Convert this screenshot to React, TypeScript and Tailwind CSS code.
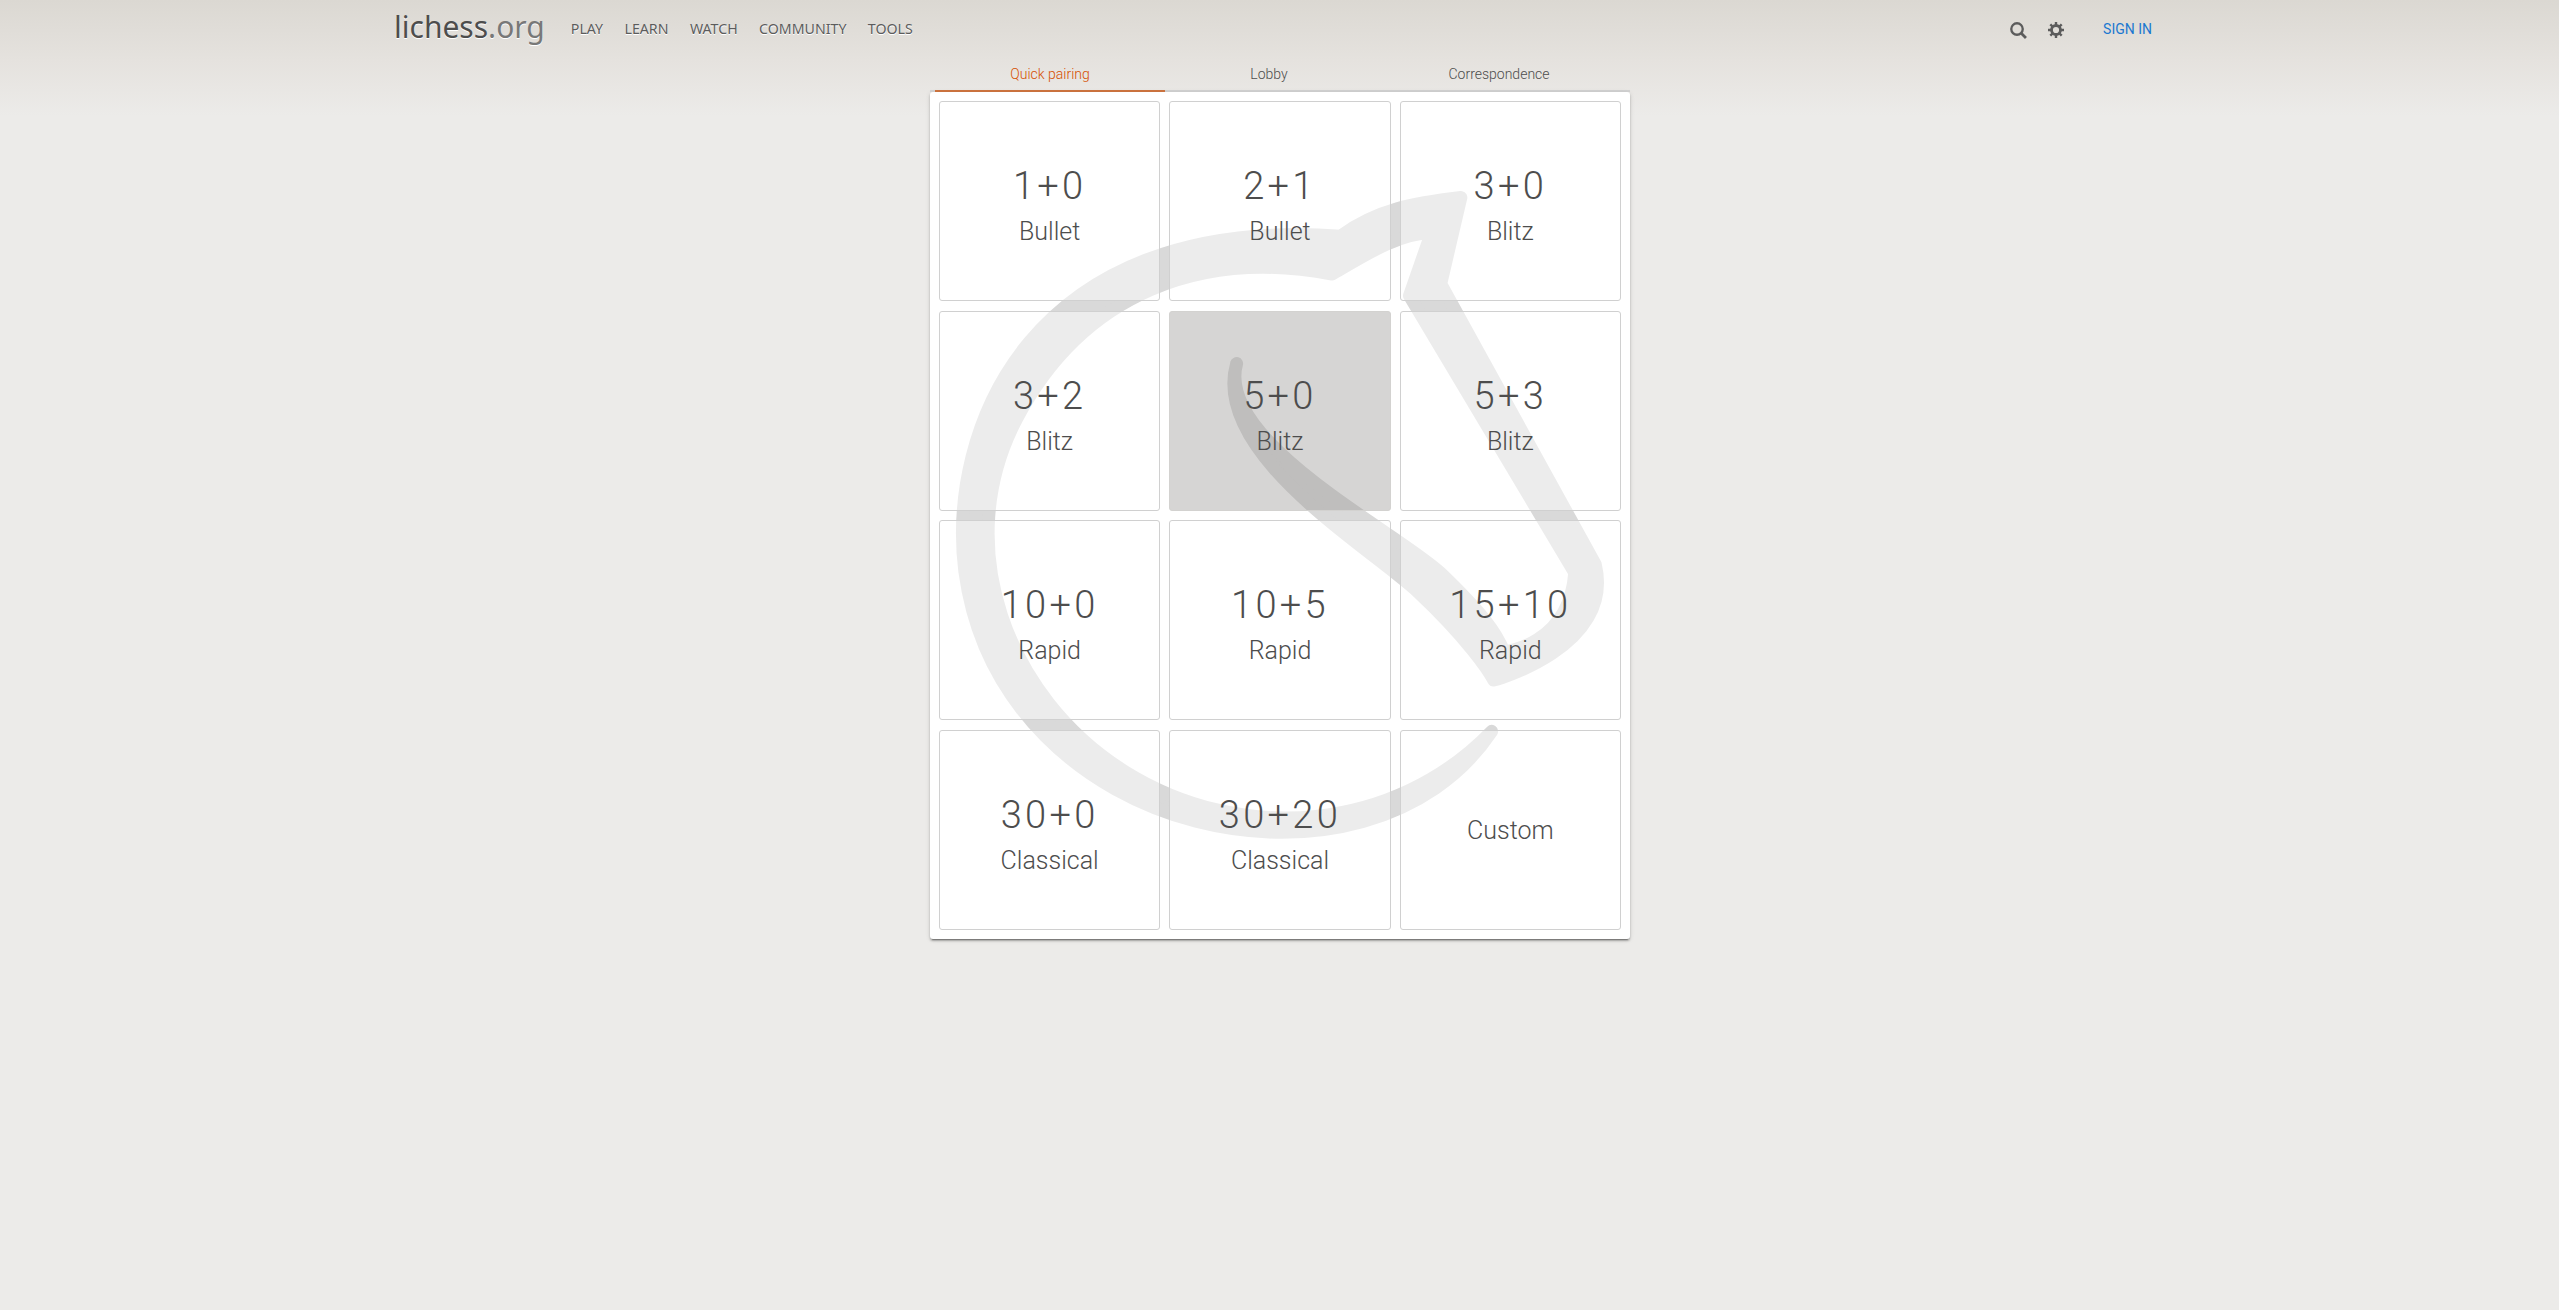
const KNIGHT =
  'M38.956.5c-3.53.418-6.452.902-9.286 2.984C5.534 1.786-.692 18.533.68 29.364 3.493 50.214 31.918 55.785 41.329 41.7c-7.444 7.696-19.276 8.752-28.323 3.084C3.959 39.116-.506 27.392 4.683 17.567 9.873 7.742 18.996 4.535 29.03 6.405c2.43-1.418 5.225-3.22 7.655-3.187l-1.694 4.86 12.752 21.37c-.439 5.654-5.459 6.112-5.459 6.112-.574-1.47-1.634-2.942-4.842-6.036-3.207-3.094-17.465-10.177-15.788-16.207-2.001 6.967 10.311 14.152 14.04 17.663 3.73 3.51 5.426 6.04 5.795 6.756 0 0 9.392-2.504 7.838-8.927L37.4 7.171z';

const NAV = ['Play', 'Learn', 'Watch', 'Community', 'Tools'];

const POOLS = [
  { clock: '1+0', perf: 'Bullet' },
  { clock: '2+1', perf: 'Bullet' },
  { clock: '3+0', perf: 'Blitz' },
  { clock: '3+2', perf: 'Blitz' },
  { clock: '5+0', perf: 'Blitz' },
  { clock: '5+3', perf: 'Blitz' },
  { clock: '10+0', perf: 'Rapid' },
  { clock: '10+5', perf: 'Rapid' },
  { clock: '15+10', perf: 'Rapid' },
  { clock: '30+0', perf: 'Classical' },
  { clock: '30+20', perf: 'Classical' },
];

const HOVERED = '5+0';

function SearchIcon() {
  return (
    <svg viewBox="0 0 16 16" className="size-[17px]" fill="none" stroke="currentColor">
      <circle cx="6.6" cy="6.6" r="5.4" strokeWidth="2.2" />
      <path d="M10.6 10.6l4.4 4.4" strokeWidth="2.6" />
    </svg>
  );
}

function GearIcon() {
  return (
    <svg viewBox="-8 -8 16 16" className="size-4" fill="none" stroke="currentColor">
      <circle r="4.5" strokeWidth="2.8" />
      <path
        strokeWidth="2.4"
        d="M0-5V-8M0 5V8M-5 0H-8M5 0H8M-3.5-3.5L-5.7-5.7M3.5-3.5L5.7-5.7M-3.5 3.5L-5.7 5.7M3.5 3.5L5.7 5.7"
      />
    </svg>
  );
}

function Header() {
  return (
    <header className="mx-auto flex h-[60px] w-[1771px] items-center pb-1 text-[#5c5c5c] [text-shadow:0_1px_0_#fff]">
      <a className="pb-[2px] text-[30px] leading-none text-[#4d4d4d]">
        lichess<span className="text-[#787878]">.org</span>
      </a>
      <nav className="ml-[26px] flex gap-[21.4px] pt-px text-[14.2px] uppercase">
        {NAV.map((item) => (
          <a key={item}>{item}</a>
        ))}
      </nav>
      <div className="ml-auto flex items-center pt-1 pr-[13px]">
        <SearchIcon />
        <span className="ml-[21px]">
          <GearIcon />
        </span>
        <a className="ml-[39px] pb-[2px] font-[Roboto] text-sm text-[#1b78d0] uppercase [text-shadow:none]">Sign in</a>
      </div>
    </header>
  );
}

function Tabs() {
  return (
    <div className="grid h-8 grid-cols-[230px_208px_252px] border-b-2 border-[#d3d3d3] px-[5px] text-center text-sm font-light text-[#4d4d4d]">
      <span className="h-8 border-b-2 border-[#d07540] pt-1 text-[#d64f00]">Quick pairing</span>
      <span className="pt-1">Lobby</span>
      <span className="pt-1">Correspondence</span>
    </div>
  );
}

function Pools() {
  return (
    <div className="relative h-[847px] rounded-[3px] bg-white shadow-[0_2px_2px_0_rgba(0,0,0,0.24),0_3px_1px_-2px_rgba(0,0,0,0.3),0_1px_5px_0_rgba(0,0,0,0.12)]">
      <svg
        viewBox="0 0 50 50"
        className="absolute top-[99.3px] left-[26px] size-[648px] overflow-visible"
        fill="#d9d9d9"
        stroke="#d9d9d9"
        strokeLinejoin="round"
      >
        <path d={KNIGHT} />
      </svg>
      <div className="relative grid h-full grid-cols-3 grid-rows-4 gap-x-[9px] gap-y-[9.33px] px-[9px] py-[9.33px]">
        {POOLS.map(({ clock, perf }) => (
          <div
            key={clock}
            className={
              'flex flex-col items-center justify-center rounded-[3px] border ' +
              (clock === HOVERED ? 'border-[#d3d2d0] bg-[rgba(152,150,147,0.4)]' : 'border-[#d0d0d0] bg-white/50')
            }
          >
            <span className="mt-4 text-[38px] leading-[45px] tracking-[3.3px]">{clock}</span>
            <span className="text-[25px] leading-[45px]">{perf}</span>
          </div>
        ))}
        <div className="flex items-center justify-center rounded-[3px] border border-[#d0d0d0] bg-white/50 pt-0.5 text-[25px]">
          Custom
        </div>
      </div>
    </div>
  );
}

export default function App() {
  return (
    <div className="min-h-[1310px] bg-[#ecebe9] bg-[linear-gradient(to_bottom,#dbd8d2,#e5e2de_60px,#ecebe9_116px)] bg-no-repeat font-['Noto_Sans',sans-serif]">
      <Header />
      <main className="ml-[930px] w-[700px] font-[Roboto,sans-serif] font-light text-[#4d4d4d]">
        <Tabs />
        <Pools />
      </main>
    </div>
  );
}
